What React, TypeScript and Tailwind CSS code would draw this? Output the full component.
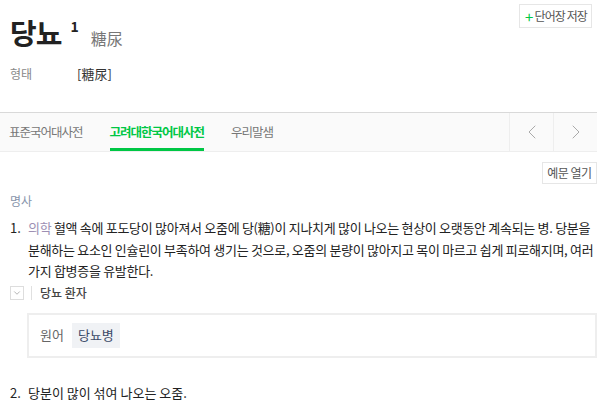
import { ChevronDown, ChevronLeft, ChevronRight } from 'lucide-react'

const font = { fontFamily: '"Noto Sans CJK KR", "Noto Sans", sans-serif' }

export default function App() {
  return (
    <div className="w-[602px] h-[412px] bg-white text-[#222] overflow-hidden" style={font}>
      {/* 표제어 */}
      <div className="flex items-start justify-between pl-[10px] pr-[10px]">
        <div className="mt-[14px] flex items-start">
          <h1 className="text-[29px] font-bold leading-[36px] tracking-[-1px]">당뇨</h1>
          <sup className="ml-[9px] mt-[5px] text-[14px] font-bold leading-none top-0">1</sup>
          <span className="ml-[12px] mt-[13px] text-[16px] leading-[22px] text-[#777]">糖尿</span>
        </div>
        <button className="mt-[4px] h-[24px] pl-[5px] pr-[4px] border border-[#e6e6e6] text-[12px] tracking-[-0.9px] text-[#555] flex items-center gap-[2px]">
          <span className="text-[#00c745] text-[15px] leading-none">+</span>
          단어장 저장
        </button>
      </div>
      <div className="flex items-center pl-[10px] mt-[14px] h-[20px]">
        <span className="w-[67px] text-[12px] text-[#888]">형태</span>
        <span className="text-[13px] text-[#333]">[糖尿]</span>
      </div>

      {/* 사전 탭 */}
      <div className="mt-[28px] mr-[5px] h-[40px] flex border-t border-t-[#d9d9d9] border-b border-b-[#eeeeee] bg-[#fafafa]">
        <div className="flex flex-1 text-[12.5px] tracking-[-1px] text-[#777] pl-[9px] gap-[27px]">
          <span className="flex items-center">표준국어대사전</span>
          <span className="flex items-center font-bold text-[#00c745] border-b-[3px] border-[#00c745] pt-[3px]">
            고려대한국어대사전
          </span>
          <span className="flex items-center">우리말샘</span>
        </div>
        <div className="w-[44px] border-l border-[#eeeeee] flex items-center justify-center text-[#aaa]">
          <ChevronLeft size={24} strokeWidth={1} />
        </div>
        <div className="w-[44px] border-l border-[#eeeeee] flex items-center justify-center text-[#aaa]">
          <ChevronRight size={24} strokeWidth={1} />
        </div>
      </div>

      <div className="flex justify-end mr-[5px] mt-[10px]">
        <button className="h-[22px] w-[55px] border border-[#e6e6e6] text-[12px] tracking-[-0.5px] text-[#555]">예문 열기</button>
      </div>

      {/* 뜻풀이 */}
      <div className="pl-[10px] pr-[5px]">
        <p className="mt-[7px] text-[12px] leading-[20px] text-[#8795ab]">명사</p>
        <div className="mt-[6px] flex text-[13px] leading-[21.5px]">
          <span className="w-[18px] shrink-0">1.</span>
          <p className="tracking-[-0.3px]">
            <span className="text-[#9d8fb3]">의학</span> 혈액 속에 포도당이 많아져서 오줌에 당(糖)이 지나치게 많이 나오는
            현상이 오랫동안 계속되는 병. 당분을 분해하는 요소인 인슐린이 부족하여 생기는 것으로, 오줌의 분량이 많아지고 목이
            마르고 쉽게 피로해지며, 여러 가지 합병증을 유발한다.
          </p>
        </div>
        <div className="mt-[3px] flex items-center h-[16px]">
          <span className="w-[14px] h-[14px] border border-[#dddddd] flex items-center justify-center text-[#888]">
            <ChevronDown size={10} strokeWidth={1.5} />
          </span>
          <span className="ml-[7px] w-px h-[14px] bg-[#e0e0e0]" />
          <span className="ml-[8px] text-[12px] font-medium text-[#444]">당뇨 환자</span>
        </div>
        <div className="mt-[12px] ml-[17px] h-[45px] border-2 border-[#eeeeee] flex items-center pl-[11px]">
          <span className="text-[13px] text-[#666]">원어</span>
          <span className="ml-[8px] h-[25px] px-[6px] bg-[#f0f2f5] text-[13px] text-[#3b4a68] flex items-center">당뇨병</span>
        </div>
        <div className="mt-[24px] flex text-[13px] leading-[21px]">
          <span className="w-[18px] shrink-0">2.</span>
          <p>당분이 많이 섞여 나오는 오줌.</p>
        </div>
      </div>
    </div>
  )
}
